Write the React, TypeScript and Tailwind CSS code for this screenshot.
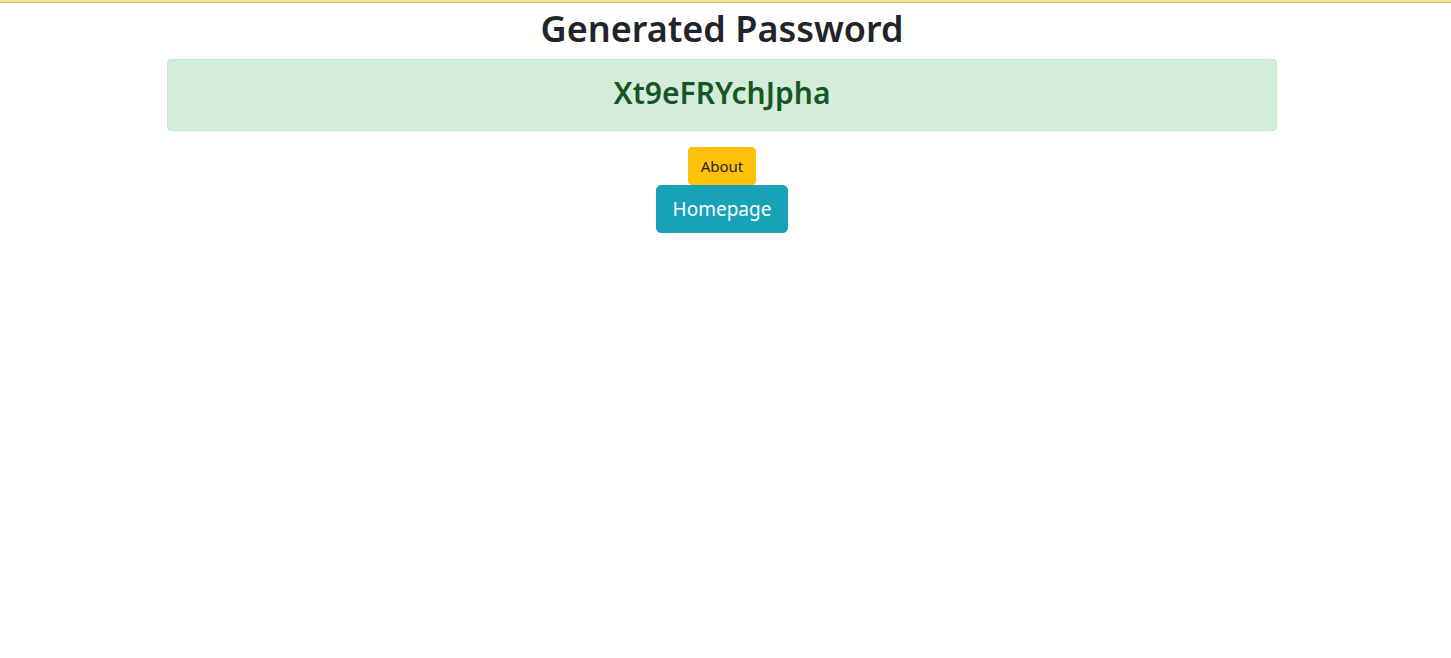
export default function App() {
  return (
    <div className="min-h-screen bg-white font-['Noto_Sans','Open_Sans',sans-serif] text-[#212529]">
      <div className="h-[2px] bg-[#f7e79a]" />
      <div className="h-px bg-[#c9bb78]" />
      <div className="pr-[7px]">
        <div className="mx-auto w-[1110px] text-center">
          <h1 className="mb-[6px] pt-[2px] text-[36px] font-semibold leading-[48px] text-[#212529]">Generated Password</h1>

          <div className="mb-4 rounded border border-[#c3e6cb] bg-[#d4edda] px-5 pt-[14px] pb-[10px] text-[#155724]">
            <h2 className="mb-2 text-[30px] font-semibold leading-[38px]">Xt9eFRYchJpha</h2>
          </div>

          <div className="flex flex-col items-center">
            <button className="h-[38px] rounded border border-[#ffc107] bg-[#ffc107] px-3 text-[15px] text-[#212529]">
              About
            </button>
            <button className="h-[48px] rounded-[5px] border border-[#17a2b8] bg-[#17a2b8] px-4 text-[19px] text-white">
              Homepage
            </button>
          </div>
        </div>
      </div>
    </div>
  );
}
